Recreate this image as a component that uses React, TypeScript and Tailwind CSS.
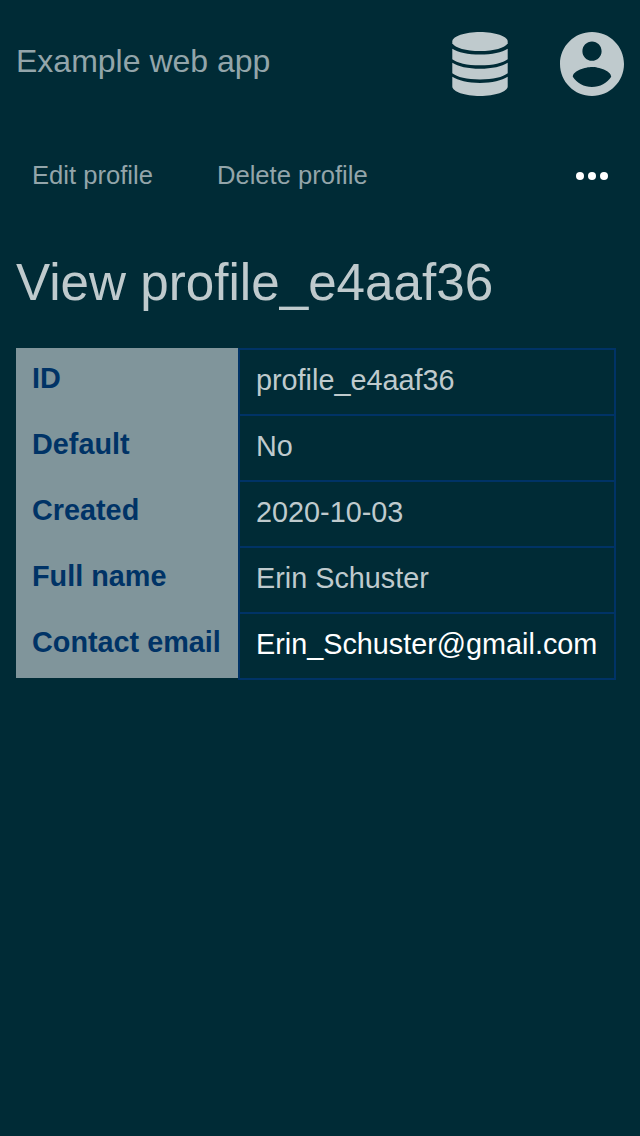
const rows = [
  { label: "ID", value: "profile_e4aaf36" },
  { label: "Default", value: "No" },
  { label: "Created", value: "2020-10-03" },
  { label: "Full name", value: "Erin Schuster" },
  { label: "Contact email", value: "Erin_Schuster@gmail.com", link: true },
];

function DatabaseIcon() {
  return (
    <svg viewBox="0 0 56 64" className="h-16 w-14" fill="currentColor">
      <path d="M28 0C43 0 55.7 4.3 55.7 9.5V11.3C53 16 42 19.1 28 19.1S3 16 .3 11.3V9.5C.3 4.3 13 0 28 0Z" />
      <path d="M.3 16.7C6 20.4 16 22.5 28 22.5S50 20.4 55.7 16.7V27.2C51 31 41 33.3 28 33.3S5 31 .3 27.2Z" />
      <path d="M.3 30.8C6 34.6 16 36.8 28 36.8S50 34.6 55.7 30.8V41.2C51 45 41 47.4 28 47.4S5 45 .3 41.2Z" />
      <path d="M.3 44.8C6 48.6 16 50.9 28 50.9S50 48.6 55.7 44.8V54.5C55.7 59.5 43 64 28 64S.3 59.5 .3 54.5Z" />
    </svg>
  );
}

function AccountIcon() {
  return (
    <svg viewBox="2 2 20 20" className="size-16" fill="currentColor">
      <path d="M12 2C6.48 2 2 6.48 2 12s4.48 10 10 10 10-4.48 10-10S17.52 2 12 2zm0 3c1.66 0 3 1.34 3 3s-1.34 3-3 3-3-1.34-3-3 1.34-3 3-3zm0 14.2c-2.5 0-4.71-1.28-6-3.22.03-1.99 4-3.08 6-3.08 1.99 0 5.97 1.09 6 3.08-1.29 1.94-3.5 3.22-6 3.22z" />
    </svg>
  );
}

export default function App() {
  return (
    <div className="min-h-[1136px] bg-[#002b36] font-['Liberation_Sans',sans-serif] text-[#bfcacd]">
      <header className="flex h-32 items-center justify-between px-4">
        <a className="pb-1.5 text-[32px] leading-9 text-[#93a5aa]">Example web app</a>
        <div className="flex items-center gap-[52px]">
          <button aria-label="Data"><DatabaseIcon /></button>
          <button aria-label="Account"><AccountIcon /></button>
        </div>
      </header>
      <nav className="flex h-24 items-center px-8 text-[25.6px] text-[#93a5aa]">
        <a className="pb-0.5">Edit profile</a>
        <a className="ml-16 pb-0.5">Delete profile</a>
        <button className="ml-auto flex gap-1 text-white" aria-label="More">
          <span className="size-2 rounded-full bg-white" />
          <span className="size-2 rounded-full bg-white" />
          <span className="size-2 rounded-full bg-white" />
        </button>
      </nav>
      <main className="px-4">
        <h1 className="flex h-[124px] items-center pb-1.5 text-[51.2px] leading-none">View profile_e4aaf36</h1>
        <dl className="grid w-[600px] grid-cols-[222px_378px] text-[28.8px] leading-8">
          {rows.map((row) => (
            <div key={row.label} className="contents">
              <dt className="h-[66px] bg-[#80959b] pt-3.5 pl-4 font-bold text-[#003366]">{row.label}</dt>
              <dd className={"-mb-0.5 h-[68px] border-2 border-[#003366] pt-3.5 pl-4" + (row.link ? " text-white" : "")}>{row.value}</dd>
            </div>
          ))}
        </dl>
      </main>
    </div>
  );
}
